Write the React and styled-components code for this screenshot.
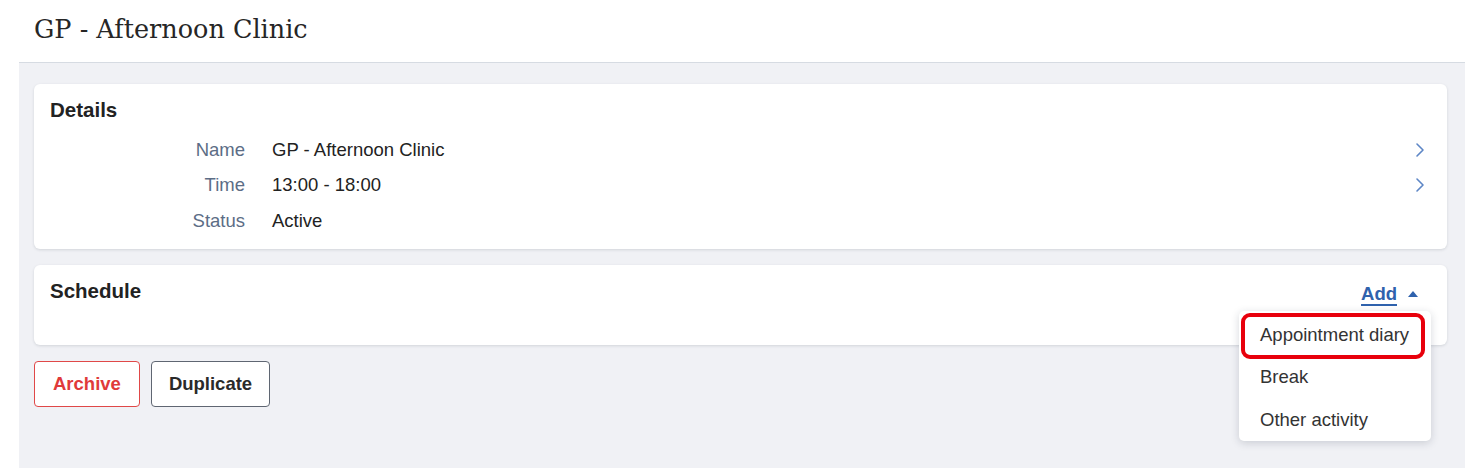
import React from 'react';
import styled, { createGlobalStyle } from 'styled-components';

const GlobalStyle = createGlobalStyle`
  html, body {
    margin: 0;
    padding: 0;
    background: #ffffff;
  }
  body {
    font-family: "Liberation Sans", Arial, sans-serif;
    color: #222;
  }
`;

const Page = styled.div`
  width: 1476px;
  height: 471px;
  overflow: hidden;
`;

const Header = styled.header`
  height: 62px;
  display: flex;
  align-items: center;
  padding-left: 34px;
  box-sizing: border-box;
`;

const PageTitle = styled.h1`
  margin: 0;
  font-family: "DejaVu Serif", Georgia, serif;
  font-weight: 400;
  font-size: 25.5px;
  color: #262626;
  padding-bottom: 4px;
`;

const Content = styled.main`
  margin-left: 19px;
  width: 1446px;
  height: 406px;
  box-sizing: border-box;
  background: #f0f1f5;
  border-top: 1px solid #d6dbe2;
  padding: 21px 18px 0 15px;
  display: flex;
  flex-direction: column;
  gap: 16px;
`;

const Card = styled.section`
  position: relative;
  background: #fff;
  border-radius: 6px;
  box-shadow: 0 1px 3px rgba(30, 40, 60, 0.14);
  padding: 14px 22px 10px 16px;
  min-height: ${(p) => p.$minHeight || 0}px;
  box-sizing: border-box;
`;

const CardHead = styled.div`
  display: flex;
  align-items: flex-start;
  justify-content: space-between;
`;

const CardTitle = styled.h2`
  margin: 0;
  font-size: 20.5px;
  line-height: 24px;
  font-weight: 700;
  color: #222;
`;

const Rows = styled.div`
  margin-top: 10px;
`;

const Row = styled.div`
  display: grid;
  grid-template-columns: 195px 1fr 20px;
  column-gap: 27px;
  align-items: center;
  height: 35.5px;
  font-size: 18.5px;
`;

const Label = styled.span`
  text-align: right;
  color: #5c6d86;
`;

const Value = styled.span`
  color: #222;
`;

const Chevron = styled.span`
  display: flex;
  justify-content: flex-end;
  color: #5d86c6;
`;

const AddLink = styled.a`
  display: flex;
  align-items: center;
  gap: 10px;
  margin-top: 4px;
  margin-right: 6px;
  font-size: 18.5px;
  font-weight: 700;
  color: #2f62ad;
  cursor: pointer;

  span {
    text-decoration: underline;
    text-decoration-thickness: 2px;
    text-underline-offset: 4px;
  }
`;

const Menu = styled.ul`
  position: absolute;
  top: 46px;
  right: 16px;
  width: 192px;
  margin: 0;
  padding: 3px 0 0;
  list-style: none;
  background: #fff;
  border-radius: 5px;
  box-shadow: 0 2px 8px rgba(30, 40, 60, 0.18);
  z-index: 5;
`;

const MenuItem = styled.li`
  position: relative;
  height: 42.5px;
  display: flex;
  align-items: center;
  padding-left: 21px;
  font-size: 18.5px;
  color: #333;
`;

const Highlight = styled.span`
  position: absolute;
  left: 2px;
  top: -1px;
  width: 184px;
  height: 46px;
  box-sizing: border-box;
  border: 4px solid #e8000c;
  border-radius: 9px;
`;

const Actions = styled.div`
  display: flex;
  gap: 11px;
`;

const Button = styled.button`
  height: 46px;
  padding: 0 ${(p) => (p.$danger ? 18 : 17)}px;
  background: #fff;
  border: 1.5px solid ${(p) => (p.$danger ? '#e04848' : '#5f6672')};
  border-radius: 4px;
  font-family: "Liberation Sans", Arial, sans-serif;
  font-size: 18.5px;
  font-weight: 700;
  color: ${(p) => (p.$danger ? '#e03a3a' : '#2a2a2a')};
  cursor: pointer;
`;

const ChevronIcon = () => (
  <svg width="10" height="16" viewBox="0 0 10 16" fill="none">
    <path d="M2 2l6 6-6 6" stroke="currentColor" strokeWidth="1.6" strokeLinecap="round" strokeLinejoin="round" />
  </svg>
);

const CaretUp = () => (
  <svg width="12" height="8" viewBox="0 0 12 8">
    <path d="M6 1l5 6H1z" fill="currentColor" />
  </svg>
);

const details = [
  { label: 'Name', value: 'GP - Afternoon Clinic', link: true },
  { label: 'Time', value: '13:00 - 18:00', link: true },
  { label: 'Status', value: 'Active', link: false },
];

const App = () => (
  <Page>
    <GlobalStyle />
    <Header>
      <PageTitle>GP - Afternoon Clinic</PageTitle>
    </Header>
    <Content>
      <Card>
        <CardTitle>Details</CardTitle>
        <Rows>
          {details.map((d) => (
            <Row key={d.label}>
              <Label>{d.label}</Label>
              <Value>{d.value}</Value>
              <Chevron>{d.link && <ChevronIcon />}</Chevron>
            </Row>
          ))}
        </Rows>
      </Card>
      <Card $minHeight={80}>
        <CardHead>
          <CardTitle>Schedule</CardTitle>
          <AddLink>
            <span>Add</span>
            <CaretUp />
          </AddLink>
        </CardHead>
        <Menu>
          <MenuItem>
            <Highlight />
            Appointment diary
          </MenuItem>
          <MenuItem>Break</MenuItem>
          <MenuItem>Other activity</MenuItem>
        </Menu>
      </Card>
      <Actions>
        <Button $danger>Archive</Button>
        <Button>Duplicate</Button>
      </Actions>
    </Content>
  </Page>
);

export default App;
